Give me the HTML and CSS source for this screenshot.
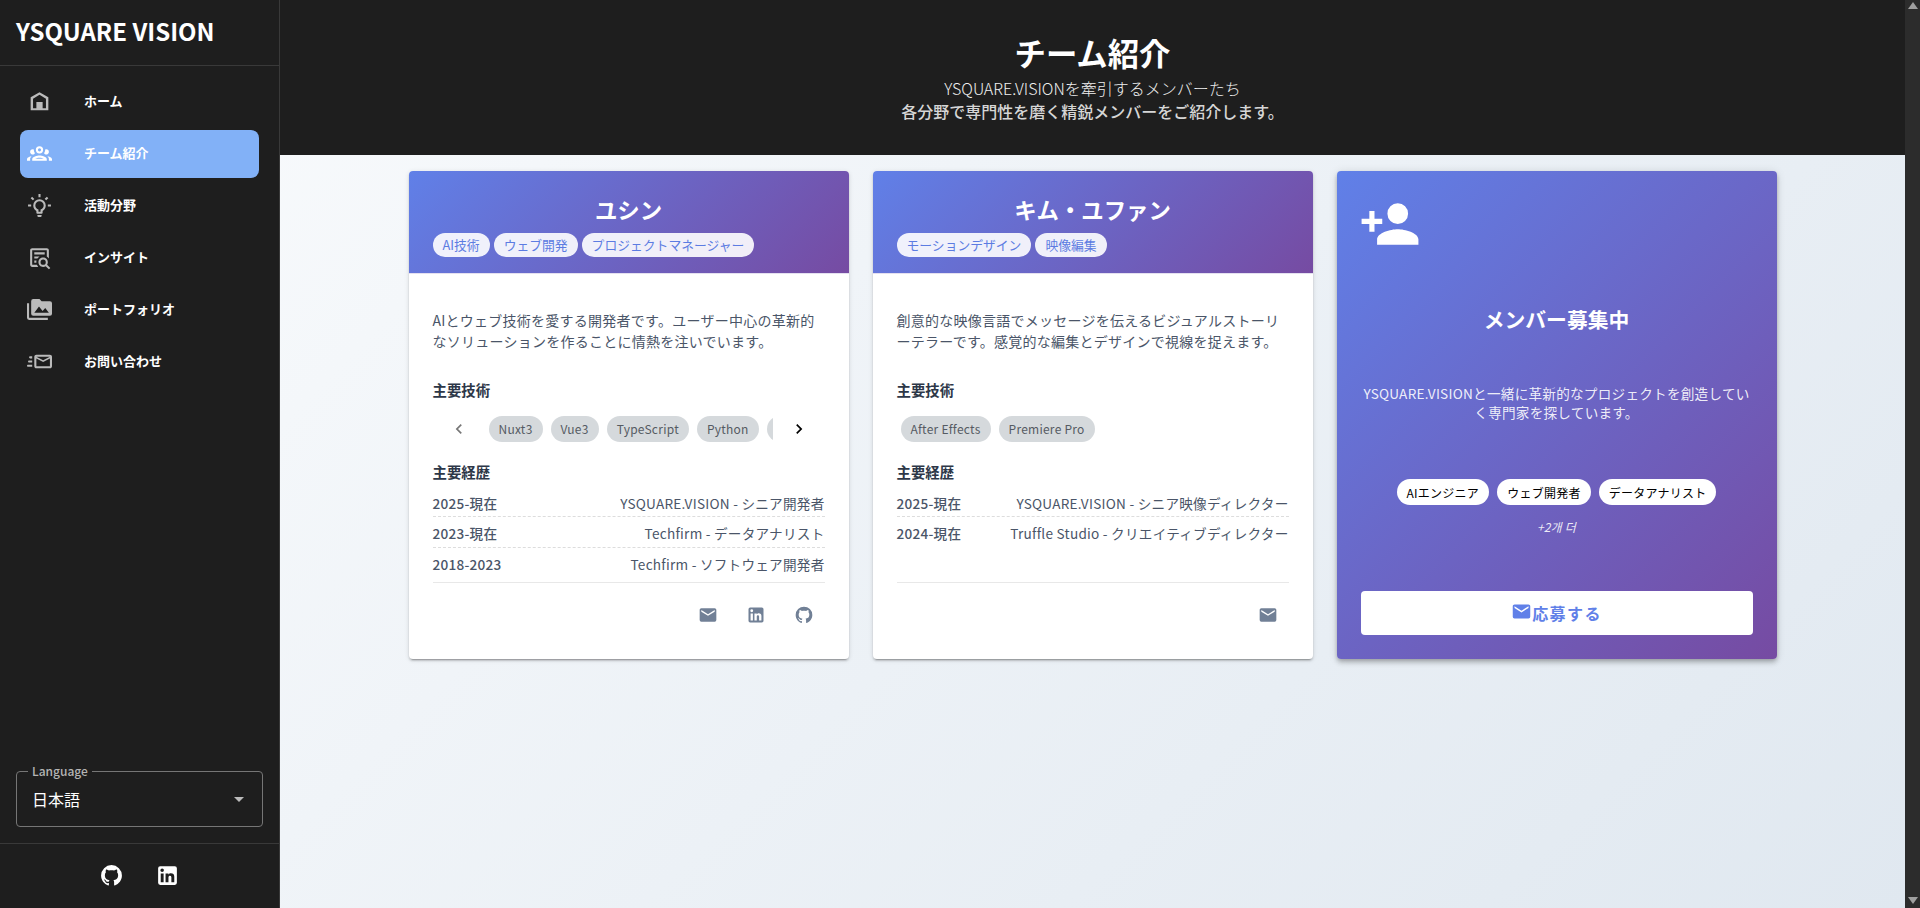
FILE: index.html
```html
<!DOCTYPE html>
<html lang="ja">
<head>
  <meta charset="UTF-8">
  <meta name="viewport" content="width=device-width, initial-scale=1.0">
  <title>YSQUARE VISION</title>
  <link rel="stylesheet" href="styles.css">
</head>
<body>

  <!-- Icon definitions -->
  <svg class="icon-defs" aria-hidden="true">
    <symbol id="i-home" viewBox="0 0 24 24"><path fill-rule="evenodd" d="M3.5 20.5V8L12 3L20.5 8V20.5H3.5M5.8 18.4H9V12.5H15V18.4H18.2V9.3L12 5.5L5.8 9.3V18.4Z"/></symbol>
    <symbol id="i-group" viewBox="0 0 24 24"><path fill-rule="evenodd" d="M12,5A3.5,3.5 0 0,0 8.5,8.5A3.5,3.5 0 0,0 12,12A3.5,3.5 0 0,0 15.5,8.5A3.5,3.5 0 0,0 12,5M12,7A1.5,1.5 0 0,1 13.5,8.5A1.5,1.5 0 0,1 12,10A1.5,1.5 0 0,1 10.5,8.5A1.5,1.5 0 0,1 12,7M5.5,8A2.5,2.5 0 0,0 3,10.5C3,11.44 3.53,12.25 4.29,12.68C4.65,12.88 5.06,13 5.5,13C5.94,13 6.35,12.88 6.71,12.68C7.08,12.47 7.39,12.17 7.62,11.81C6.89,10.86 6.5,9.7 6.5,8.5C6.5,8.41 6.5,8.31 6.5,8.22C6.2,8.08 5.86,8 5.5,8M18.5,8C18.14,8 17.8,8.08 17.5,8.22C17.5,8.31 17.5,8.41 17.5,8.5C17.5,9.7 17.11,10.86 16.38,11.81C16.5,12 16.63,12.15 16.78,12.3C16.94,12.45 17.1,12.58 17.29,12.68C17.65,12.88 18.06,13 18.5,13C18.94,13 19.35,12.88 19.71,12.68C20.47,12.25 21,11.44 21,10.5A2.5,2.5 0 0,0 18.5,8M12,14C9.66,14 5,15.17 5,17.5V19H19V17.5C19,15.17 14.34,14 12,14M4.71,14.55C2.78,14.78 0,15.76 0,17.5V19H3V17.07C3,16.06 3.69,15.22 4.71,14.55M19.29,14.55C20.31,15.22 21,16.06 21,17.07V19H24V17.5C24,15.76 21.22,14.78 19.29,14.55M12,16C13.53,16 15.24,16.5 16.23,17H7.77C8.76,16.5 10.47,16 12,16Z"/></symbol>
    <symbol id="i-bulb" viewBox="0 0 24 24"><path fill-rule="evenodd" d="M20,11H23V13H20V11M1,11H4V13H1V11M13,1V4H11V1H13M4.92,3.5L7.05,5.64L5.63,7.05L3.5,4.93L4.92,3.5M16.95,5.63L19.07,3.5L20.5,4.93L18.37,7.05L16.95,5.63M12,6A6,6 0 0,1 18,12C18,14.22 16.79,16.16 15,17.2V19A1,1 0 0,1 14,20H10A1,1 0 0,1 9,19V17.2C7.21,16.16 6,14.22 6,12A6,6 0 0,1 12,6M14,21V22A1,1 0 0,1 13,23H11A1,1 0 0,1 10,22V21H14M11,18H13V15.87C14.73,15.43 16,13.86 16,12A4,4 0 0,0 12,8A4,4 0 0,0 8,12C8,13.86 9.27,15.43 11,15.87V18Z"/></symbol>
    <symbol id="i-insight" viewBox="0 0 24 24"><path fill-rule="evenodd" d="M15.5,12C18,12 20,14 20,16.5C20,17.38 19.75,18.21 19.31,18.9L22.39,22L21,23.39L17.88,20.32C17.19,20.75 16.37,21 15.5,21C13,21 11,19 11,16.5C11,14 13,12 15.5,12M15.5,14A2.5,2.5 0 0,0 13,16.5A2.5,2.5 0 0,0 15.5,19A2.5,2.5 0 0,0 18,16.5A2.5,2.5 0 0,0 15.5,14M5,3H19C20.11,3 21,3.89 21,5V13.03C20.5,12.23 19.81,11.54 19,11V5H5V19H9.5C9.81,19.75 10.26,20.42 10.81,21H5C3.89,21 3,20.11 3,19V5C3,3.89 3.89,3 5,3M7,7H17V9H7V7M7,11H12.03C11.23,11.5 10.54,12.19 10,13H7V11M7,15H9.17C9.06,15.5 9,16 9,16.5V17H7V15Z"/></symbol>
    <symbol id="i-folder" viewBox="0 0 24 24"><path fill-rule="evenodd" d="M7,15L11.5,9L15,13.5L17.5,10.5L21,15M22,4H14L12,2H6A2,2 0 0,0 4,4V16A2,2 0 0,0 6,18H22A2,2 0 0,0 24,16V6A2,2 0 0,0 22,4M2,6H0V20A2,2 0 0,0 2,22H20V20H2V6Z"/></symbol>
    <symbol id="i-contact" viewBox="0 0 24 24"><path fill-rule="evenodd" d="M22 5.5H9C7.9 5.5 7 6.4 7 7.5V16.5C7 17.61 7.9 18.5 9 18.5H22C23.11 18.5 24 17.61 24 16.5V7.5C24 6.4 23.11 5.5 22 5.5M22 16.5H9V9.17L15.5 12.5L22 9.17V16.5M15.5 10.81L9 7.5H22L15.5 10.81M5 16.5C5 16.67 5.03 16.83 5.05 17H1C.45 17 0 16.55 0 16S.45 15 1 15H5V16.5M3 7H5.05C5.03 7.17 5 7.33 5 7.5V9H3C2.45 9 2 8.55 2 8S2.45 7 3 7M1 12C1 11.45 1.45 11 2 11H5V13H2C1.45 13 1 12.55 1 12Z"/></symbol>
    <symbol id="i-github" viewBox="0 0 24 24"><path d="M12,2A10,10 0 0,0 2,12C2,16.42 4.87,20.17 8.84,21.5C9.34,21.58 9.5,21.27 9.5,21C9.5,20.77 9.5,20.14 9.5,19.31C6.73,19.91 6.14,17.97 6.14,17.97C5.68,16.81 5.03,16.5 5.03,16.5C4.12,15.88 5.1,15.9 5.1,15.9C6.1,15.97 6.63,16.93 6.63,16.93C7.5,18.45 8.97,18 9.54,17.76C9.63,17.11 9.89,16.67 10.17,16.42C7.95,16.17 5.62,15.31 5.62,11.5C5.62,10.39 6,9.5 6.65,8.79C6.55,8.54 6.2,7.5 6.75,6.15C6.75,6.15 7.59,5.88 9.5,7.17C10.29,6.95 11.15,6.84 12,6.84C12.85,6.84 13.71,6.95 14.5,7.17C16.41,5.88 17.25,6.15 17.25,6.15C17.8,7.5 17.45,8.54 17.35,8.79C18,9.5 18.38,10.39 18.38,11.5C18.38,15.32 16.04,16.16 13.81,16.41C14.17,16.72 14.5,17.33 14.5,18.26C14.5,19.6 14.5,20.68 14.5,21C14.5,21.27 14.66,21.59 15.17,21.5C19.14,20.16 22,16.42 22,12A10,10 0 0,0 12,2Z"/></symbol>
    <symbol id="i-linkedin" viewBox="0 0 24 24"><path fill-rule="evenodd" d="M19 3A2 2 0 0 1 21 5V19A2 2 0 0 1 19 21H5A2 2 0 0 1 3 19V5A2 2 0 0 1 5 3H19M18.5 18.5V13.2A3.26 3.26 0 0 0 15.24 9.94C14.39 9.94 13.4 10.46 12.92 11.24V10.13H10.13V18.5H12.92V13.57C12.92 12.8 13.54 12.17 14.31 12.17A1.4 1.4 0 0 1 15.71 13.57V18.5H18.5M6.88 8.56A1.68 1.68 0 0 0 8.56 6.88C8.56 5.95 7.81 5.19 6.88 5.19A1.69 1.69 0 0 0 5.19 6.88C5.19 7.81 5.95 8.56 6.88 8.56M8.27 18.5V10.13H5.5V18.5H8.27Z"/></symbol>
    <symbol id="i-email" viewBox="0 0 24 24"><path fill-rule="evenodd" d="M20,8L12,13L4,8V6L12,11L20,6M20,4H4C2.89,4 2,4.89 2,6V18A2,2 0 0,0 4,20H20A2,2 0 0,0 22,18V6C22,4.89 21.1,4 20,4Z"/></symbol>
    <symbol id="i-plus" viewBox="0 0 24 24"><path d="M15,14C12.33,14 7,15.33 7,18V20H23V18C23,15.33 17.67,14 15,14M6,10V7H4V10H1V12H4V15H6V12H9V10M15,12A4,4 0 0,0 19,8A4,4 0 0,0 15,4A4,4 0 0,0 11,8A4,4 0 0,0 15,12Z"/></symbol>
    <symbol id="i-left" viewBox="0 0 24 24"><path d="M15.41,16.58L10.83,12L15.41,7.41L14,6L8,12L14,18L15.41,16.58Z"/></symbol>
    <symbol id="i-right" viewBox="0 0 24 24"><path d="M8.59,16.58L13.17,12L8.59,7.41L10,6L16,12L10,18L8.59,16.58Z"/></symbol>
  </svg>

  <div class="app">
    <!-- Sidebar -->
    <aside class="sidebar">
      <div class="brand">YSQUARE VISION</div>
      <nav class="menu">
        <a class="menu-item" href="#"><svg class="icon"><use href="#i-home"/></svg><span>ホーム</span></a>
        <a class="menu-item active" href="#"><svg class="icon"><use href="#i-group"/></svg><span>チーム紹介</span></a>
        <a class="menu-item" href="#"><svg class="icon"><use href="#i-bulb"/></svg><span>活動分野</span></a>
        <a class="menu-item" href="#"><svg class="icon"><use href="#i-insight"/></svg><span>インサイト</span></a>
        <a class="menu-item" href="#"><svg class="icon"><use href="#i-folder"/></svg><span>ポートフォリオ</span></a>
        <a class="menu-item" href="#"><svg class="icon"><use href="#i-contact"/></svg><span>お問い合わせ</span></a>
      </nav>
      <div class="language">
        <span class="language-label">Language</span>
        <span>日本語</span>
        <span class="caret"></span>
      </div>
      <div class="social">
        <svg class="icon"><use href="#i-github"/></svg>
        <svg class="icon"><use href="#i-linkedin"/></svg>
      </div>
    </aside>

    <main class="content">
      <header class="hero">
        <h1>チーム紹介</h1>
        <p class="hero-sub">YSQUARE.VISIONを牽引するメンバーたち</p>
        <p class="hero-text">各分野で専門性を磨く精鋭メンバーをご紹介します。</p>
      </header>

      <section class="cards">
        <article class="card">
          <div class="card-header">
            <h2>ユシン</h2>
            <div class="tags">
              <span class="tag">AI技術</span>
              <span class="tag">ウェブ開発</span>
              <span class="tag">プロジェクトマネージャー</span>
            </div>
          </div>
          <div class="card-body">
            <p class="bio">AIとウェブ技術を愛する開発者です。ユーザー中心の革新的なソリューションを作ることに情熱を注いでいます。</p>
            <h3>主要技術</h3>
            <div class="slider">
              <button class="arrow disabled"><svg><use href="#i-left"/></svg></button>
              <div class="skills">
                <span class="chip">Nuxt3</span>
                <span class="chip">Vue3</span>
                <span class="chip">TypeScript</span>
                <span class="chip">Python</span>
                <span class="chip chip-next"></span>
              </div>
              <button class="arrow"><svg><use href="#i-right"/></svg></button>
            </div>
            <h3>主要経歴</h3>
            <ul class="career">
              <li><span class="period">2025-現在</span><span>YSQUARE.VISION - シニア開発者</span></li>
              <li><span class="period">2023-現在</span><span>Techfirm - データアナリスト</span></li>
              <li><span class="period">2018-2023</span><span>Techfirm - ソフトウェア開発者</span></li>
            </ul>
            <div class="links">
              <svg><use href="#i-email"/></svg>
              <svg><use href="#i-linkedin"/></svg>
              <svg><use href="#i-github"/></svg>
            </div>
          </div>
        </article>

        <article class="card">
          <div class="card-header">
            <h2>キム・ユファン</h2>
            <div class="tags">
              <span class="tag">モーションデザイン</span>
              <span class="tag">映像編集</span>
            </div>
          </div>
          <div class="card-body">
            <p class="bio">創意的な映像言語でメッセージを伝えるビジュアルストーリーテラーです。感覚的な編集とデザインで視線を捉えます。</p>
            <h3>主要技術</h3>
            <div class="slider">
              <div class="skills">
                <span class="chip">After Effects</span>
                <span class="chip">Premiere Pro</span>
              </div>
            </div>
            <h3>主要経歴</h3>
            <ul class="career">
              <li><span class="period">2025-現在</span><span>YSQUARE.VISION - シニア映像ディレクター</span></li>
              <li><span class="period">2024-現在</span><span>Truffle Studio - クリエイティブディレクター</span></li>
            </ul>
            <div class="links">
              <svg><use href="#i-email"/></svg>
            </div>
          </div>
        </article>

        <!-- Recruiting card -->
        <article class="card recruit">
          <svg class="recruit-icon"><use href="#i-plus"/></svg>
          <h2>メンバー募集中</h2>
          <p>YSQUARE.VISIONと一緒に革新的なプロジェクトを創造していく専門家を探しています。</p>
          <div class="roles">
            <span class="chip">AIエンジニア</span>
            <span class="chip">ウェブ開発者</span>
            <span class="chip">データアナリスト</span>
          </div>
          <div class="more" lang="ko">+2개 더</div>
          <button class="apply"><svg><use href="#i-email"/></svg><span>応募する</span></button>
        </article>
      </section>
    </main>

    <div class="scrollbar">
      <span class="scroll-up"></span>
      <span class="scroll-down"></span>
    </div>
  </div>

</body>
</html>
```
FILE: styles.css
```css
* {
  margin: 0;
  padding: 0;
  box-sizing: border-box;
}

body {
  font-family: "Noto Sans CJK JP", "Noto Sans CJK KR", sans-serif;
  background-color: #1e1e1e;
  color: white;
  overflow: hidden;
}

svg {
  display: block;
  fill: currentColor;
  flex: none;
}

button {
  font-family: inherit;
  border: none;
  background: none;
  cursor: pointer;
}

.icon-defs {
  display: none;
}

.app {
  display: flex;
  height: 100vh;
}

/* Sidebar */
.sidebar {
  width: 280px;
  flex: none;
  display: flex;
  flex-direction: column;
  background-color: #1e1e1e;
  border-right: 1px solid #393939;
}

.brand {
  height: 66px;
  padding: 0 16px;
  line-height: 61px;
  font-size: 24px;
  font-weight: 700;
  border-bottom: 1px solid #393939;
}

.menu {
  flex: 1;
  display: flex;
  flex-direction: column;
  gap: 4px;
  padding: 12px 20px;
}

.menu-item {
  display: flex;
  align-items: center;
  gap: 32px;
  height: 48px;
  padding: 0 7px 1px;
  border-radius: 8px;
  color: white;
  font-size: 13px;
  font-weight: 700;
  text-decoration: none;
}

.menu-item span {
  padding-bottom: 2px;
}

.icon {
  width: 25px;
  height: 25px;
}

.menu-item .icon {
  color: #bbb;
}

.menu-item.active {
  background-color: #82b1f7;
}

.menu-item.active .icon {
  color: white;
}

.language {
  position: relative;
  display: flex;
  align-items: center;
  justify-content: space-between;
  height: 56px;
  margin: 0 16px 16px;
  padding: 0 18px 0 15px;
  border: 1px solid #767676;
  border-radius: 4px;
  font-size: 16px;
}

.language-label {
  position: absolute;
  top: -11px;
  left: 11px;
  padding: 0 4px;
  background-color: #1e1e1e;
  color: #b4b4b4;
  font-size: 12px;
  font-weight: 500;
  line-height: 20px;
}

.caret {
  border: 5px solid transparent;
  border-top-color: #bbb;
  border-bottom: none;
}

.social {
  display: flex;
  align-items: center;
  justify-content: center;
  gap: 31px;
  height: 65px;
  padding-bottom: 1px;
  border-top: 1px solid #393939;
}

/* Main area */
.content {
  flex: 1;
  min-width: 0;
  background: linear-gradient(135deg, #f8fafc 0%, #e0e8f0 100%);
}

.hero {
  height: 155px;
  padding-top: 30px;
  background-color: #1e1e1e;
  text-align: center;
}

.hero h1 {
  margin-bottom: 1px;
  font-size: 31.4px;
  line-height: 46px;
}

.hero p {
  font-size: 16px;
  line-height: 23px;
  color: #d6d6d6;
}

.hero .hero-sub {
  color: #f0f0f0;
  font-weight: 300;
}

.hero-text {
  font-weight: 500;
}

.cards {
  display: grid;
  grid-template-columns: repeat(3, 440px);
  grid-auto-rows: 488px;
  justify-content: center;
  gap: 24px;
  padding-top: 16px;
}

.card {
  display: flex;
  flex-direction: column;
  overflow: hidden;
  background-color: white;
  border-radius: 4px;
  box-shadow: 0 3px 1px -2px rgba(0, 0, 0, 0.2), 0 2px 2px rgba(0, 0, 0, 0.14), 0 1px 5px rgba(0, 0, 0, 0.12);
}

.card-header {
  height: 103px;
  padding: 23px 24px 0;
  background: linear-gradient(135deg, #6080e8 0%, #764ba2 100%);
  border-bottom: 1px solid #e4e0f0;
}

.card-header h2 {
  font-size: 22.4px;
  line-height: 30px;
  text-align: center;
}

.tags {
  display: flex;
  gap: 4px;
  margin-top: 9px;
}

.tag {
  height: 24px;
  padding: 0 10px;
  border-radius: 12px;
  background-color: rgba(255, 255, 255, 0.9);
  color: #5c7ce2;
  font-size: 12.8px;
  line-height: 23px;
}

.card-body {
  flex: 1;
  display: flex;
  flex-direction: column;
  padding: 36px 24px 24px;
}

.bio {
  height: 42px;
  color: #4a5568;
  font-size: 14px;
  line-height: 21px;
  letter-spacing: 0.25px;
}

.card h3 {
  margin-top: 28px;
  color: #2d3748;
  font-size: 14.4px;
  line-height: 20px;
}

.slider {
  display: flex;
  align-items: center;
  height: 52px;
  margin: 3px 0 -21px;
}

.arrow {
  display: flex;
  align-items: center;
  justify-content: center;
  width: 52px;
  height: 52px;
  flex: none;
  color: black;
}

.arrow svg {
  width: 20px;
  height: 20px;
}

.arrow.disabled {
  color: #777;
}

.skills {
  flex: 1;
  display: flex;
  gap: 8px;
  padding-left: 4px;
  overflow: hidden;
}

.chip {
  flex: none;
  height: 26px;
  padding: 0 10px;
  border-radius: 13px;
  background-color: #d5d9dc;
  color: #555b63;
  font-size: 12px;
  line-height: 26px;
  letter-spacing: 0.25px;
}

.chip-next {
  width: 64px;
}

.career {
  height: 101px;
  padding-top: 6px;
  border-bottom: 1px solid #e8e8e8;
  list-style: none;
}

.career li {
  display: flex;
  justify-content: space-between;
  height: 31px;
  color: #4a5568;
  font-size: 13.6px;
  line-height: 33px;
  letter-spacing: 0.25px;
  border-bottom: 1px dashed #ddd;
}

.career li:nth-child(1) {
  margin-top: -2px;
  line-height: 34px;
}

.career li:last-child {
  border-bottom: none;
}

.period {
  font-weight: 500;
}

.links {
  display: flex;
  justify-content: flex-end;
  gap: 28px;
  padding: 22px 11px 0;
  color: #718096;
}

.links svg {
  width: 20px;
  height: 20px;
}

/* Recruiting card */
.recruit {
  align-items: center;
  padding: 22px 24px 24px;
  background: linear-gradient(135deg, #6080e8 0%, #764ba2 100%);
  box-shadow: 0 2px 4px -1px rgba(0, 0, 0, 0.2), 0 4px 5px rgba(0, 0, 0, 0.14), 0 1px 10px rgba(0, 0, 0, 0.12);
}

.recruit-icon {
  align-self: flex-start;
  width: 62px;
  height: 62px;
  margin-left: -2px;
}

.recruit h2 {
  margin-top: 49px;
  font-size: 20.8px;
  line-height: 30px;
}

.recruit p {
  margin-top: 50px;
  color: rgba(255, 255, 255, 0.9);
  font-size: 13.6px;
  line-height: 19px;
  letter-spacing: 0.25px;
  text-align: center;
}

.roles {
  display: flex;
  gap: 8px;
  margin-top: 57px;
}

.roles .chip {
  background-color: white;
  color: black;
  line-height: 28px;
}

.more {
  margin-top: 12px;
  color: rgba(255, 255, 255, 0.88);
  font-size: 12px;
  font-style: italic;
  line-height: 20px;
}

.apply {
  display: flex;
  align-items: center;
  justify-content: center;
  width: 100%;
  height: 44px;
  margin-top: auto;
  border-radius: 4px;
  background-color: white;
  color: #6080e8;
  font-size: 16px;
  font-weight: 700;
  letter-spacing: 1.4px;
}

.apply svg {
  width: 21px;
  height: 21px;
  margin-bottom: 4px;
}

/* Scrollbar track */
.scrollbar {
  width: 15px;
  flex: none;
  display: flex;
  flex-direction: column;
  align-items: center;
  justify-content: space-between;
  padding: 2px 0 4px;
  background-color: #2c2c2c;
}

.scroll-up,
.scroll-down {
  border: 5px solid transparent;
}

.scroll-up {
  border-top: none;
  border-bottom: 7px solid #a0a0a0;
}

.scroll-down {
  border-bottom: none;
  border-top: 7px solid #a0a0a0;
}
```
